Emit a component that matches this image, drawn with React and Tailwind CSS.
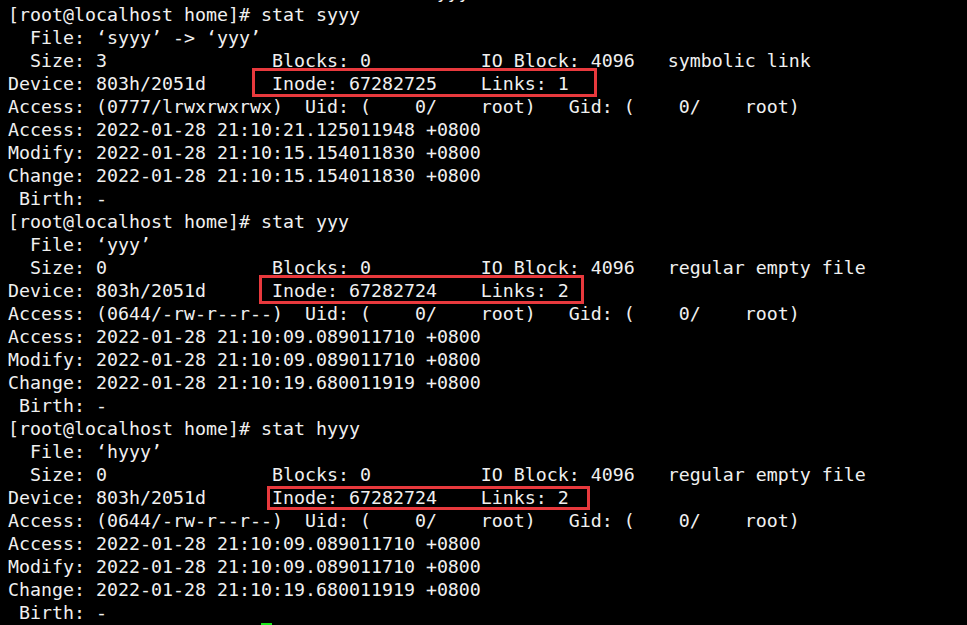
import React from "react";

const lines = [
  "[root@localhost home]# stat syyy",
  "  File: ‘syyy’ -> ‘yyy’",
  "  Size: 3               Blocks: 0          IO Block: 4096   symbolic link",
  "Device: 803h/2051d      Inode: 67282725    Links: 1",
  "Access: (0777/lrwxrwxrwx)  Uid: (    0/    root)   Gid: (    0/    root)",
  "Access: 2022-01-28 21:10:21.125011948 +0800",
  "Modify: 2022-01-28 21:10:15.154011830 +0800",
  "Change: 2022-01-28 21:10:15.154011830 +0800",
  " Birth: -",
  "[root@localhost home]# stat yyy",
  "  File: ‘yyy’",
  "  Size: 0               Blocks: 0          IO Block: 4096   regular empty file",
  "Device: 803h/2051d      Inode: 67282724    Links: 2",
  "Access: (0644/-rw-r--r--)  Uid: (    0/    root)   Gid: (    0/    root)",
  "Access: 2022-01-28 21:10:09.089011710 +0800",
  "Modify: 2022-01-28 21:10:09.089011710 +0800",
  "Change: 2022-01-28 21:10:19.680011919 +0800",
  " Birth: -",
  "[root@localhost home]# stat hyyy",
  "  File: ‘hyyy’",
  "  Size: 0               Blocks: 0          IO Block: 4096   regular empty file",
  "Device: 803h/2051d      Inode: 67282724    Links: 2",
  "Access: (0644/-rw-r--r--)  Uid: (    0/    root)   Gid: (    0/    root)",
  "Access: 2022-01-28 21:10:09.089011710 +0800",
  "Modify: 2022-01-28 21:10:09.089011710 +0800",
  "Change: 2022-01-28 21:10:19.680011919 +0800",
  " Birth: -",
];

export default function App() {
  return (
    <div className="relative w-[967px] h-[625px] overflow-hidden bg-black">
      <div
        className="pl-[8px] pt-[3px] text-[18.27px] leading-[23px] text-[#f0f0f0] whitespace-pre"
        style={{ fontFamily: '"DejaVu Sans Mono", monospace' }}
      >
        <div className="-mt-[23px]">{"                                       yyy"}</div>
        {lines.map((l, i) => (
          <div key={i}>{l}</div>
        ))}
        <div>
          {"[root@localhost home]# "}
          <span className="relative -top-[1px] inline-block w-[11px] h-[22px] align-top bg-[#19e619]"></span>
        </div>
      </div>
      <div className="absolute left-[252px] top-[68px] w-[345px] h-[29px] border-[3px] border-[#e8393d]"></div>
      <div className="absolute left-[259px] top-[275px] w-[325px] h-[29px] border-[3px] border-[#e8393d]"></div>
      <div className="absolute left-[267px] top-[486px] w-[323px] h-[24px] border-[3px] border-[#e8393d]"></div>
    </div>
  );
}
